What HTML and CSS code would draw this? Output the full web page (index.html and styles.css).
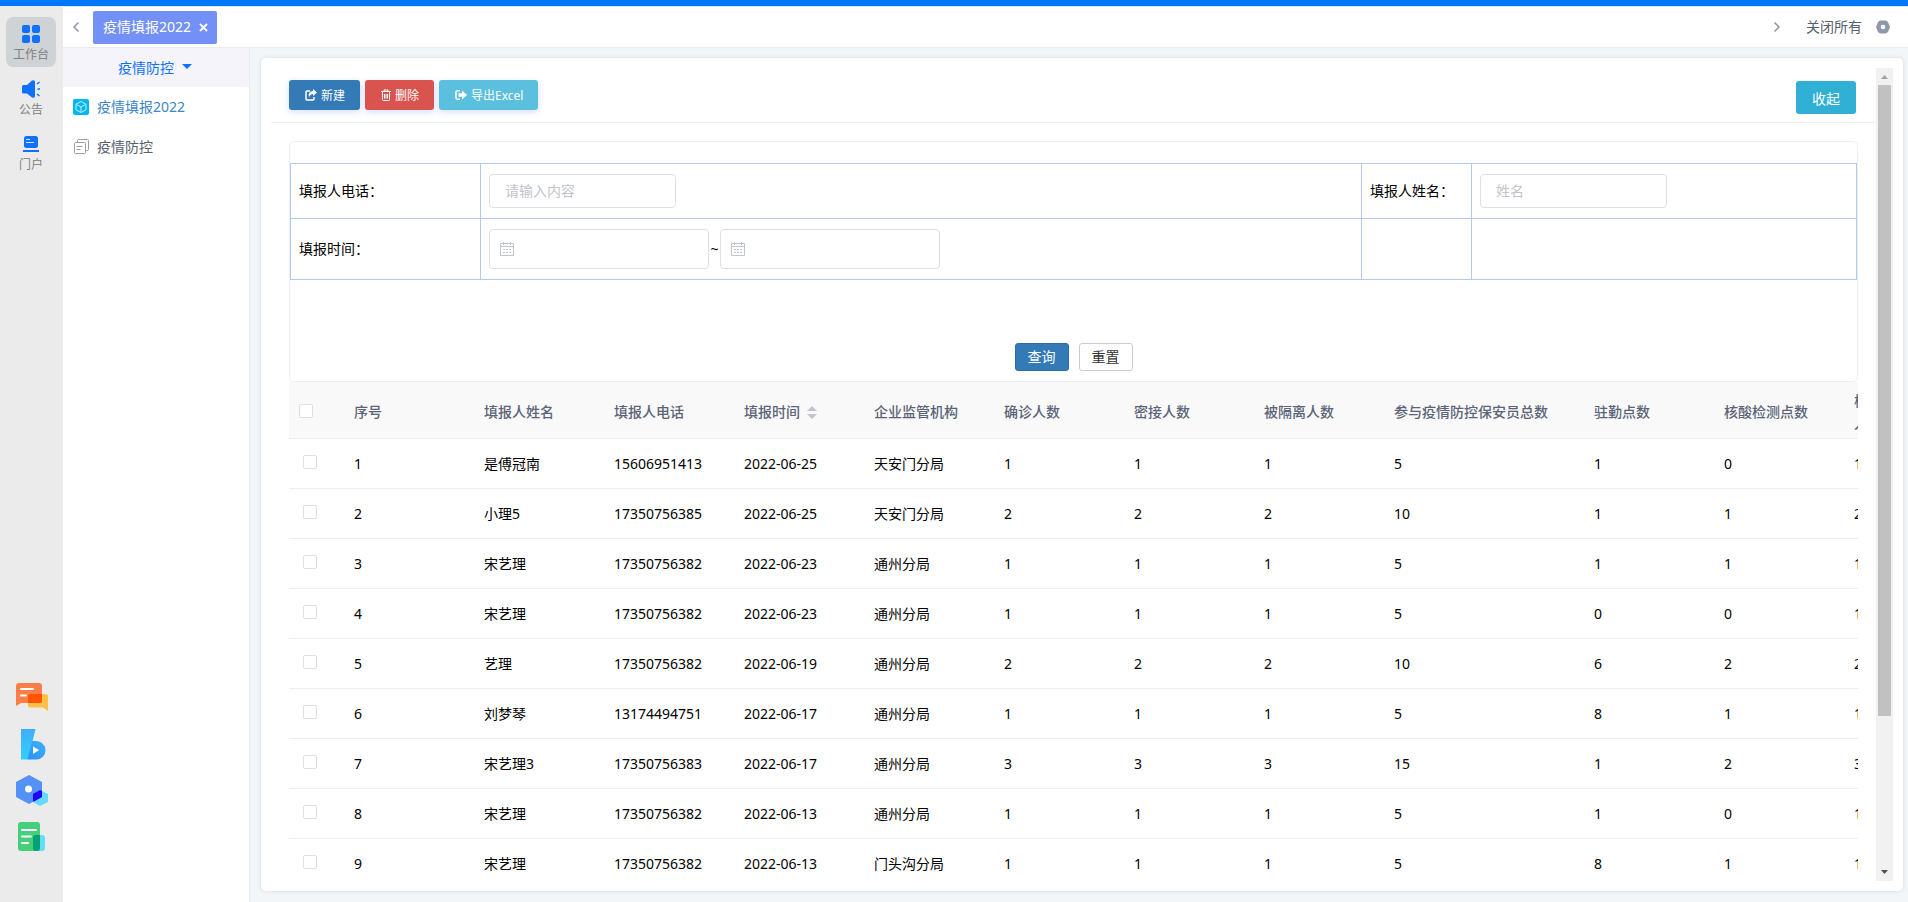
FILE: index.html
```html
<!DOCTYPE html>
<html lang="zh-CN">
<head>
    <meta charset="UTF-8">
    <meta name="viewport" content="width=device-width, initial-scale=1.0">
    <title>疫情填报2022</title>
    <link rel="stylesheet" href="styles.css">
</head>
<body>
    <div class="app">
        <nav class="rail">
            <a class="rail-item active" href="#">
                <svg width="18" height="18" viewBox="0 0 18 18" fill="#1071ff"><rect width="8" height="8" rx="2"/><rect x="10" width="8" height="8" rx="2"/><rect y="10" width="8" height="8" rx="2"/><rect x="10" y="10" width="8" height="8" rx="2"/></svg>
                <span>工作台</span>
            </a>
            <a class="rail-item" href="#">
                <svg width="18" height="18" viewBox="0 0 18 18"><path d="M1.500 5H5l5-4.500Q13 -.5 13 2v14q0 2.500-3 1.500L5 13.500H1.500Q0 13.500 0 12V6.500Q0 5 1.500 5z" fill="#1071ff"/><path d="M15 4l2.500-2M15.500 9H18M15 14l2.500 2" stroke="#1071ff" stroke-width="1.500" fill="none"/></svg>
                <span>公告</span>
            </a>
            <a class="rail-item" href="#">
                <svg width="18" height="18" viewBox="0 0 18 18"><rect x="2" y="1" width="14" height="12" rx="2.500" fill="#1071ff"/><path d="M4 4.500h4M4 7.500h8" stroke="#fff" stroke-width="1" opacity=".8"/><path d="M1 16h16" stroke="#1071ff" stroke-width="2"/></svg>
                <span>门户</span>
            </a>
            <div class="rail-apps">
                <a href="#" aria-label="消息">
                    <svg width="32" height="32" viewBox="0 0 32 32"><path d="M15 12h14q3 0 3 2v15l-5-3.500H15q-3 0-3-2V15q0-3 3-3z" fill="#fcbf47"/><path d="M3 1h20q3 0 3 3v15q0 2-2 2H5l-5 3V4q0-3 3-3z" fill="#fb7d48"/><path d="M15 12h11v7q0 2-2 2H12v-6q0-3 3-3z" fill="#ff5500"/><path d="M5 7h12M5 13.500h5" stroke="#fff" stroke-width="2" stroke-linecap="round"/></svg>
                </a>
                <a href="#" aria-label="视频">
                    <svg width="32" height="32" viewBox="0 0 32 32">
                        <defs><linearGradient id="bar" x1="0" y1="0" x2="0" y2="1"><stop offset="0" stop-color="#3fadff"/><stop offset="1" stop-color="#2ed3fb"/></linearGradient><linearGradient id="bowl" x1="0" y1="1" x2="1" y2="0"><stop offset="0" stop-color="#2c8dfa"/><stop offset="1" stop-color="#3eb4fd"/></linearGradient></defs>
                        <path d="M5 1h14.500L12 31.500H5z" fill="url(#bar)"/><path d="M16 13h4.500a9 9.250 0 0 1 0 18.500H11.500z" fill="url(#bowl)"/><path d="M17 18.500l6 3.500-6 4z" fill="#fff"/>
                    </svg>
                </a>
                <a href="#" aria-label="应用">
                    <svg width="32" height="32" viewBox="0 0 32 32"><path d="M24 16l8 4v8l-8 4-7-4v-8z" fill="#64dbfb"/><path d="M13 1l13 7v15l-13 7-13-7V8z" fill="#5391f7"/><path d="M24 16l2 1v6l-8 4.500-1-.5v-7z" fill="#2100f5"/><circle cx="12.500" cy="15" r="3.500" fill="#fff"/></svg>
                </a>
                <a href="#" aria-label="文档">
                    <svg width="32" height="32" viewBox="0 0 32 32"><rect x="17" y="15" width="12" height="16" rx="3" fill="#65dcfa"/><rect x="2" y="2" width="22" height="29" rx="3" fill="#45cf7b"/><path d="M20 15h4v13q0 3-3 3h-1q-3 0-3-3V18q0-3 3-3z" fill="#05a172"/><path d="M6 10h14M6 16.500h9M6 23h6" stroke="#fff" stroke-width="2" stroke-linecap="round"/></svg>
                </a>
            </div>
        </nav>

        <div class="workspace">
            <header class="tabs">
                <button class="icon-btn" type="button" aria-label="向左"><svg width="8" height="12" viewBox="0 0 8 12"><path d="M6.500 1.500L2 6l4.500 4.500" fill="none" stroke="#8a96a3" stroke-width="1.500"/></svg></button>
                <a class="tab" href="#">疫情填报2022 <svg width="9" height="9" viewBox="0 0 9 9"><path d="M1 1l7 7M8 1L1 8" stroke="#fff" stroke-width="2"/></svg></a>
                <div class="tabs-right">
                    <button class="icon-btn" type="button" aria-label="向右"><svg width="8" height="12" viewBox="0 0 8 12"><path d="M1.500 1.500L6 6l-4.500 4.500" fill="none" stroke="#8a96a3" stroke-width="1.500"/></svg></button>
                    <button class="close-all" type="button">关闭所有</button>
                    <button class="icon-btn" type="button" aria-label="设置"><svg width="14" height="14" viewBox="0 0 14 14"><path fill-rule="evenodd" d="M4 .5h6l2 1.500L14 7l-2 5-2 1.500H4L2 12 0 7l2-5zM7 4.700a2.300 2.300 0 1 0 0 4.600 2.300 2.300 0 0 0 0-4.600z" fill="#8d9aad"/></svg></button>
                </div>
            </header>

            <div class="content">
                <aside class="menu">
                    <button class="menu-title" type="button">疫情防控 <i class="caret"></i></button>
                    <a class="menu-item current" href="#">
                        <svg width="16" height="16" viewBox="0 0 16 16"><rect width="16" height="16" rx="2" fill="#00b7f4"/><path d="M8 2.500l5 2.750v5.500L8 13.500l-5-2.750v-5.500zM3.500 5.500L8 8l4.500-2.500M8 8v5" fill="none" stroke="#c4f1ff" stroke-width="1"/></svg>
                        疫情填报2022
                    </a>
                    <a class="menu-item" href="#">
                        <svg width="16" height="16" viewBox="0 0 16 16" fill="none" stroke="#9d9baa"><path d="M4.500 3.500v-2q0-1 1-1h9q1 0 1 1v9q0 1-1 1h-2"/><rect x="1.500" y="3.500" width="11" height="11" rx="1"/><path d="M3.500 7.500h6M3.500 10.500h4"/></svg>
                        疫情防控
                    </a>
                </aside>

                <main class="main">
                    <div class="card">
                        <div class="scroll-view">
                            <div class="toolbar">
                                <button class="btn btn-primary" type="button"><svg width="12" height="12" viewBox="0 0 12 12"><path d="M5 2H2Q1 2 1 3v7q0 1 1 1h6q1 0 1-1V8" fill="none" stroke="#fff" stroke-width="1.500"/><path d="M8 0l4 3.500L8 7V5Q5 5 4 8.500 2.500 2.500 8 2z" fill="#fff"/></svg>新建</button>
                                <button class="btn btn-danger" type="button"><svg width="10" height="12" viewBox="0 0 10 12" fill="none" stroke="#fff"><path d="M0 2.500h10M3 2.500V1h4v1.500M1.500 3v7.500q0 1 1 1h5q1 0 1-1V3M3.500 5v4.500M5 5v4.500M6.500 5v4.500"/></svg>删除</button>
                                <button class="btn btn-info" type="button"><svg width="12" height="12" viewBox="0 0 12 12"><path d="M5 1.750H2.500Q1 1.750 1 3v6q0 1.250 1.500 1.250H5" fill="none" stroke="#fff" stroke-width="1.500"/><path d="M3.500 4.250H7V1.500L12 6l-5 4.500V7.750H3.500z" fill="#fff"/></svg>导出Excel</button>
                                <button class="btn-fold" type="button">收起</button>
                            </div>

                            <form class="search">
                                <table class="search-table">
                                    <colgroup><col class="col-label"><col><col class="col-label-sm"><col class="col-name"></colgroup>
                                    <tr>
                                        <td><label for="phone">填报人电话：</label></td>
                                        <td><input class="text" type="text" id="phone" name="phone" placeholder="请输入内容"></td>
                                        <td><label for="name">填报人姓名：</label></td>
                                        <td><input class="text" type="text" id="name" name="name" placeholder="姓名"></td>
                                    </tr>
                                    <tr>
                                        <td><label for="start">填报时间：</label></td>
                                        <td>
                                            <div class="range">
                                                <div class="date"><svg width="14" height="14" viewBox="0 0 14 14" fill="none" stroke="#c0c4cc"><path d="M.5 1.500h13v12H.5zM.5 4.500h13M3.500 0v3M10.500 0v3"/><path d="M3 7.500h8M3 10.500h8" stroke-dasharray="2 1"/></svg><input type="text" id="start" name="start" aria-label="开始时间"></div>
                                                <span>~</span>
                                                <div class="date"><svg width="14" height="14" viewBox="0 0 14 14" fill="none" stroke="#c0c4cc"><path d="M.5 1.500h13v12H.5zM.5 4.500h13M3.500 0v3M10.500 0v3"/><path d="M3 7.500h8M3 10.500h8" stroke-dasharray="2 1"/></svg><input type="text" id="end" name="end" aria-label="结束时间"></div>
                                            </div>
                                        </td>
                                        <td></td>
                                        <td></td>
                                    </tr>
                                </table>
                                <div class="search-actions">
                                    <button class="btn-query" type="submit">查询</button>
                                    <button class="btn-reset" type="reset">重置</button>
                                </div>
                            </form>

                            <div class="table-wrap">
                                <table class="list">
                                    <colgroup><col class="w-check"><col><col><col><col><col><col><col><col><col class="w-wide"><col><col><col></colgroup>
                                    <thead>
                                        <tr>
                                            <th><input type="checkbox" aria-label="全选"></th>
                                            <th>序号</th>
                                            <th>填报人姓名</th>
                                            <th>填报人电话</th>
                                            <th>填报时间<svg class="sort" width="10" height="14" viewBox="0 0 10 14" fill="#c0c4cc"><path d="M0 6l5-5 5 5zM0 9h10l-5 5z"/></svg></th>
                                            <th>企业监管机构</th>
                                            <th>确诊人数</th>
                                            <th>密接人数</th>
                                            <th>被隔离人数</th>
                                            <th>参与疫情防控保安员总数</th>
                                            <th>驻勤点数</th>
                                            <th>核酸检测点数</th>
                                            <th>核酸检测点保安人数</th>
                                        </tr>
                                    </thead>
                                    <tbody id="rows"></tbody>
                                </table>
                            </div>
                        </div>
                        <div class="scrollbar">
                            <svg width="17" height="17" viewBox="0 0 17 17"><path d="M5 11l3.500-4 3.500 4z" fill="#a3a3a3"/></svg>
                            <div class="track"><div class="thumb"></div></div>
                            <svg width="17" height="17" viewBox="0 0 17 17"><path d="M5 6l3.500 4L12 6z" fill="#505050"/></svg>
                        </div>
                    </div>
                </main>
            </div>
        </div>
    </div>

    <script src="script.js"></script>
</body>
</html>
```
FILE: styles.css
```css
* {
    box-sizing: border-box;
}
body {
    margin: 0;
    font-family: "Noto Sans", "Noto Sans CJK SC", sans-serif;
    font-size: 14px;
    line-height: 20px;
    color: #000;
}
button,
input {
    font-family: inherit;
    font-size: 14px;
}
button {
    border: none;
    background: none;
    padding: 0;
    cursor: pointer;
}
a {
    text-decoration: none;
}
svg {
    display: block;
    flex: none;
}
.app {
    display: flex;
    height: 100vh;
    border-top: 6px solid #0077f9;
    overflow: hidden;
}

/* Left icon rail */
.rail {
    display: flex;
    flex-direction: column;
    align-items: center;
    gap: 5px;
    width: 63px;
    flex: none;
    padding: 11px 7px 50px 6px;
    background: #ebebeb;
}
.rail-item {
    display: flex;
    flex-direction: column;
    align-items: center;
    gap: 4px;
    width: 50px;
    height: 50px;
    padding-top: 8px;
    border-radius: 7px;
    font-size: 12px;
    line-height: 16px;
    color: #808080;
}
.rail-item.active {
    background: #d0d3d6;
}
.rail-apps {
    display: flex;
    flex-direction: column;
    gap: 14px;
    margin-top: auto;
    padding-left: 1px;
}

/* Tab bar */
.workspace {
    display: flex;
    flex-direction: column;
    flex: 1;
    min-width: 0;
}
.tabs {
    display: flex;
    align-items: center;
    height: 42px;
    flex: none;
    padding: 0 18px 0 9px;
    border-top: 1px solid #e6e9ee;
    border-bottom: 1px solid #ebebee;
}
.icon-btn {
    display: flex;
}
.tab {
    display: flex;
    align-items: center;
    gap: 8px;
    height: 33px;
    margin-left: 13px;
    padding: 0 9px 0 10px;
    border-radius: 2px;
    background: #7290f5;
    color: #fff;
}
.tabs-right {
    display: flex;
    align-items: center;
    gap: 14px;
    margin-left: auto;
}
.close-all {
    margin-left: 11px;
    padding-bottom: 2px;
    color: #566070;
}

/* Second level menu */
.content {
    display: flex;
    flex: 1;
    min-height: 0;
}
.menu {
    width: 187px;
    flex: none;
    border-right: 1px solid #ebebee;
}
.menu-title {
    display: flex;
    align-items: center;
    justify-content: center;
    gap: 8px;
    width: 100%;
    height: 39px;
    padding: 0 2px 2px 0;
    background: #f4f4fa;
    color: #1270ff;
}
.caret {
    border: 5px solid transparent;
    border-top-color: #1270ff;
    border-bottom: none;
}
.menu-item {
    display: flex;
    align-items: center;
    gap: 8px;
    height: 40px;
    padding-left: 10px;
    color: #566070;
}
.menu-item.current {
    color: #3b86cc;
}

/* Page card */
.main {
    flex: 1;
    min-width: 0;
    padding: 10px 5px 11px 11px;
    background: #f2f6f9;
}
.card {
    display: flex;
    height: 100%;
    padding: 10px;
    border-radius: 5px;
    background: #fff;
    box-shadow: 0 0 4px rgba(0, 0, 0, 0.12);
}
.scroll-view {
    flex: 1;
    min-width: 0;
    overflow: hidden;
}
.scrollbar {
    display: flex;
    flex-direction: column;
    width: 17px;
    background: #f1f1f1;
}
.track {
    flex: 1;
    padding: 0 2px;
}
.thumb {
    height: 81%;
    background: #c1c1c1;
}

/* Toolbar */
.toolbar {
    display: flex;
    align-items: flex-start;
    gap: 5px;
    height: 55px;
    padding: 12px 20px 0 18px;
    border-bottom: 1px solid #f0f0f0;
}
.btn {
    display: flex;
    align-items: center;
    gap: 4px;
    height: 30px;
    padding: 0 15px 0 16px;
    border-radius: 3px;
    font-size: 12px;
    color: #fff;
    box-shadow: 0 2px 6px rgba(90, 130, 240, 0.25);
}
.btn-primary {
    background: #337ab7;
}
.btn-danger {
    background: #d9534f;
}
.btn-info {
    background: #5bc0de;
}
.btn-fold {
    width: 60px;
    height: 33px;
    margin: 1px 0 0 auto;
    border-radius: 3px;
    background: #31b0d5;
    color: #fff;
}

/* Search form */
.search {
    margin: 18px 18px 0;
    padding: 21px 0 10px;
    border: 1px solid #ebeef5;
    border-radius: 5px;
}
.search-table {
    width: 100%;
    table-layout: fixed;
    border-collapse: collapse;
}
.search-table td {
    height: 55px;
    padding: 0 8px;
    border: 1px solid #b1caea;
}
.search-table tr:last-child td {
    height: 61px;
}
.col-label {
    width: 190px;
}
.col-label-sm {
    width: 110px;
}
.col-name {
    width: 385px;
}
.text,
.date {
    border: 1px solid #dcdfe6;
    border-radius: 4px;
    background: #fff;
}
.text {
    display: block;
    width: 187px;
    height: 34px;
    padding: 0 15px 2px;
}
.text::placeholder {
    color: #c0c4cc;
}
.range {
    display: flex;
    align-items: center;
}
.range span {
    width: 11px;
    text-align: center;
}
.date {
    display: flex;
    align-items: center;
    gap: 8px;
    width: 220px;
    height: 40px;
    padding: 0 10px;
}
.date input {
    width: 100%;
    border: none;
    outline: none;
}
.search-actions {
    display: flex;
    justify-content: center;
    gap: 10px;
    margin-top: 63px;
}
.btn-query,
.btn-reset {
    width: 54px;
    height: 28px;
    padding-bottom: 2px;
    border: 1px solid #2e6da4;
    border-radius: 3px;
    background: #337ab7;
    color: #fff;
}
.btn-reset {
    border-color: #ccc;
    background: #fff;
    color: #333;
}

/* Data table */
.table-wrap {
    margin: 0 18px;
    overflow: hidden;
}
.list {
    width: 1685px;
    table-layout: fixed;
    border-collapse: separate;
    border-spacing: 0;
}
.list col {
    width: 130px;
}
.list .w-check {
    width: 55px;
}
.list .w-wide {
    width: 200px;
}
.list th,
.list td {
    height: 50px;
    padding: 0 10px;
    border-bottom: 1px solid #ebeef5;
    text-align: left;
}
.list th {
    height: 57px;
    padding-top: 3px;
    background: #f9f9f9;
    line-height: 23px;
    font-weight: 500;
    color: #5b6377;
}
.list th:first-child {
    padding-top: 1px;
}
.list td:first-child {
    padding: 0 0 3px 14px;
}
.list input {
    display: block;
    appearance: none;
    width: 14px;
    height: 14px;
    margin: 0;
    border: 1px solid #dcdfe6;
    border-radius: 2px;
    background: #fff;
}
.sort {
    display: inline-block;
    margin-left: 7px;
    vertical-align: -2px;
}
```
FILE: script.js
```javascript
const rows = [
    ['是傅冠南', '15606951413', '2022-06-25', '天安门分局', 1, 1, 1, 5, 1, 0, 1],
    ['小理5', '17350756385', '2022-06-25', '天安门分局', 2, 2, 2, 10, 1, 1, 2],
    ['宋艺理', '17350756382', '2022-06-23', '通州分局', 1, 1, 1, 5, 1, 1, 1],
    ['宋艺理', '17350756382', '2022-06-23', '通州分局', 1, 1, 1, 5, 0, 0, 1],
    ['艺理', '17350756382', '2022-06-19', '通州分局', 2, 2, 2, 10, 6, 2, 2],
    ['刘梦琴', '13174494751', '2022-06-17', '通州分局', 1, 1, 1, 5, 8, 1, 1],
    ['宋艺理3', '17350756383', '2022-06-17', '通州分局', 3, 3, 3, 15, 1, 2, 3],
    ['宋艺理', '17350756382', '2022-06-13', '通州分局', 1, 1, 1, 5, 1, 0, 1],
    ['宋艺理', '17350756382', '2022-06-13', '门头沟分局', 1, 1, 1, 5, 8, 1, 1]
];

document.getElementById('rows').innerHTML = rows.map((row, i) => {
    const cells = [i + 1, ...row].map(value => `<td>${value}</td>`).join('');
    return `<tr><td><input type="checkbox" aria-label="选择第${i + 1}行"></td>${cells}</tr>`;
}).join('');
```
